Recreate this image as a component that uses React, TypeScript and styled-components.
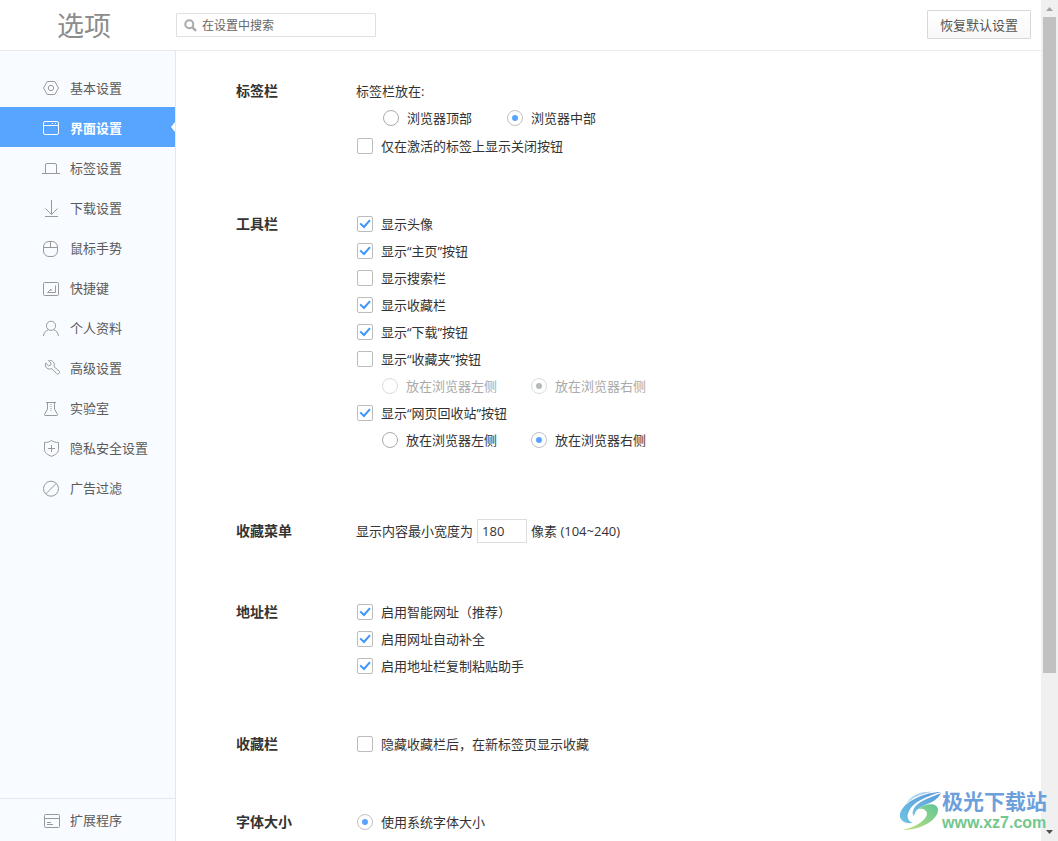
import React, { useState } from "react";
import styled, { createGlobalStyle, css } from "styled-components";

const GlobalStyle = createGlobalStyle`
  * { box-sizing: border-box; }
  html, body, #root { height: 100%; margin: 0; }
  body {
    overflow: hidden;
    background: #fff;
    color: #333;
    font: 13px/26px "Open Sans", "Noto Sans CJK SC", sans-serif;
  }
  button, input { font-family: inherit; }
`;

const Window = styled.div`
  display: flex;
  height: 100vh;
  overflow: hidden;
`;

const Page = styled.div`
  flex: 1;
  min-width: 0;
  display: flex;
  flex-direction: column;
`;

const Header = styled.header`
  flex: none;
  display: flex;
  align-items: center;
  height: 51px;
  padding-right: 10px;
  border-bottom: 1px solid #ebebeb;
`;

const PageTitle = styled.h1`
  width: 176px;
  margin: 0;
  padding: 2px 0 0 57px;
  color: #8c8c8c;
  font-size: 27px;
  line-height: 48px;
  font-weight: 400;
`;

const SearchBox = styled.label`
  display: flex;
  align-items: center;
  gap: 5px;
  width: 200px;
  height: 24px;
  padding-left: 7px;
  border: 1px solid #e0e0e0;
  border-radius: 1px;
`;

const SearchInput = styled.input`
  flex: 1;
  min-width: 0;
  height: 22px;
  padding: 0;
  border: 0;
  outline: 0;
  background: none;
  font-size: 12px;
  &::placeholder { color: #666; opacity: 1; }
`;

const ResetButton = styled.button`
  margin: 0 0 1px auto;
  width: 104px;
  height: 29px;
  padding: 0 0 1px;
  border: 1px solid #d8d8d8;
  border-radius: 1px;
  background: linear-gradient(#fff, #f8f8f8);
  color: #555;
  font-size: 13px;
`;

const Body = styled.div`
  flex: 1;
  min-height: 0;
  display: flex;
`;

const Sidebar = styled.nav`
  flex: none;
  display: flex;
  flex-direction: column;
  width: 176px;
  border-right: 1px solid #e2e8ee;
  background: #f8fbff;
`;

const NavList = styled.div`
  flex: 1;
  padding-top: 16px;
`;

const NavLink = styled.a<{ $active?: boolean }>`
  position: relative;
  display: flex;
  align-items: center;
  gap: 9px;
  height: 40px;
  padding: 2px 0 0 42px;
  color: #5a5a5a;
  text-decoration: none;
  svg { color: #999; }
  ${(p) =>
    p.$active &&
    css`
      background: #57a5ff;
      color: #fff;
      font-weight: 700;
      svg { color: #fff; }
      &::after {
        content: "";
        position: absolute;
        right: 0;
        top: 15px;
        border: 5px solid transparent;
        border-left: 0;
        border-right: 4px solid #fff;
      }
    `}
`;

const NavFooter = styled.div`
  border-top: 1px solid #e2e8ee;
  padding-bottom: 2px;
`;

const Content = styled.main`
  flex: 1;
  min-width: 0;
  overflow: hidden;
  padding: 27px 20px 0 60px;
`;

const Section = styled.section<{ $spacious?: boolean }>`
  display: flex;
  margin-bottom: 51px;
  ${(p) => p.$spacious && "padding: 13px 0 3px;"}
`;

const SectionTitle = styled.h2`
  flex: none;
  width: 120px;
  margin: 0;
  font-size: 14px;
  line-height: 26px;
  font-weight: 700;
`;

const Rows = styled.div`
  flex: 1;
  min-width: 0;
`;

const Row = styled.div`
  display: flex;
  align-items: center;
  height: 27px;
  padding-bottom: 1px;
`;

const RadioRow = styled(Row)<{ $roomy?: boolean }>`
  gap: ${(p) => (p.$roomy ? 34 : 33)}px;
  height: ${(p) => (p.$roomy ? 28 : 27)}px;
  padding-bottom: ${(p) => (p.$roomy ? 2 : 1)}px;
  padding-left: ${(p) => (p.$roomy ? 26 : 25)}px;
`;

const Choice = styled.label<{ $disabled?: boolean }>`
  display: flex;
  align-items: center;
  gap: 8px;
  margin-left: 1px;
  color: ${(p) => (p.$disabled ? "#aaa" : "#333")};
`;

const CheckInput = styled.input`
  appearance: none;
  flex: none;
  width: 16px;
  height: 16px;
  margin: 0;
  border: 1px solid #bcbcbc;
  border-radius: 2px;
  background: #fff;
  display: grid;
  place-items: center;
  &:checked::after {
    content: "";
    width: 12px;
    height: 10px;
    background: #3f96f8;
    clip-path: polygon(4% 50%, 16% 38%, 40% 66%, 86% 6%, 98% 18%, 42% 94%);
  }
`;

const RadioInput = styled.input`
  appearance: none;
  flex: none;
  width: 16px;
  height: 16px;
  margin: 0;
  border: 1px solid #ababab;
  border-radius: 50%;
  background: #fff;
  display: grid;
  place-items: center;
  &:checked { border-color: #c0c0c0; }
  &:checked::after {
    content: "";
    width: 6px;
    height: 6px;
    border-radius: 50%;
    background: #57a5ff;
  }
  &:disabled { border-color: #dcdcdc; }
  &:disabled:checked::after { background: #b4bab4; }
`;

const WidthInput = styled.input`
  width: 50px;
  height: 24px;
  margin: 0 4px;
  padding: 0 4px;
  border: 1px solid #ddd;
  outline: 0;
  color: #333;
  font-size: 13px;
`;

const ScrollTrack = styled.div`
  flex: none;
  display: flex;
  flex-direction: column;
  align-items: center;
  width: 17px;
  background: #f0f0f0;
`;

const ScrollArrow = styled.svg`
  flex: none;
  display: block;
  width: 17px;
  height: 17px;
`;

const ScrollThumb = styled.div`
  width: 13px;
  height: 78%;
  background: #c1c1c1;
`;

const ScrollSpace = styled.div`
  flex: 1;
  width: 17px;
`;

const Watermark = styled.div`
  position: absolute;
  right: 11px;
  bottom: 7px;
  display: flex;
  align-items: center;
  pointer-events: none;
`;

const WatermarkText = styled.div`
  display: flex;
  flex-direction: column;
`;

const WatermarkName = styled.span`
  color: #6c9fdb;
  font-size: 21px;
  line-height: 22px;
  font-weight: 700;
`;

const WatermarkUrl = styled.span`
  color: #72c78d;
  font: 700 16px/22px "Liberation Sans", sans-serif;
`;

const icons: Record<string, React.ReactNode> = {
  basic: (
    <>
      <path d="M5.200 2.500h7.600L16.500 9l-3.700 6.500H5.200L1.500 9z" />
      <circle cx="9" cy="9" r="2.700" />
    </>
  ),
  window: (
    <>
      <rect x="1.500" y="2.500" width="15" height="13" rx="1.500" />
      <path d="M1.500 6.500h15M10 4.500h1M13 4.500h1" />
    </>
  ),
  tab: <path d="M0 14.500h18M3.500 14.500V6a1.500 1.500 0 0 1 1.500-1.500h8A1.500 1.500 0 0 1 14.500 6v8.500" />,
  download: <path d="M9.500 1v14.500M3.500 9.500l6 6 6-6M3 17.500h13" />,
  mouse: (
    <>
      <rect x="1.500" y="2.500" width="14" height="15" rx="5.500" />
      <path d="M1.500 8.500h14M8.500 2.500v6" />
    </>
  ),
  shortcut: (
    <>
      <rect x="1.500" y="3.500" width="15" height="13" rx="1" />
      <path d="M13.500 6.500v7h-8L9 10v2" />
    </>
  ),
  profile: (
    <>
      <circle cx="9" cy="6.800" r="4.600" />
      <path d="M1.500 17c.3-3 2-5.200 4.700-6.200M16.500 17c-.3-3-2-5.200-4.700-6.200" />
    </>
  ),
  wrench: (
    <path d="M3.600 4 6.500 6.800l2-.6.600-2L6.500 1.600c2.700-.8 6 .9 5.800 4.600l-.3 1.500 5 4.300c1.700 1.600-.8 4.200-2.500 2.500L9.900 9.700C6.300 11 2.200 8.800 3.600 4z" />
  ),
  lab: (
    <>
      <path d="M4 3.500h10M5.500 3.500v6.500l-3 5.500c-.3.600 0 1 .6 1h11.800c.6 0 .9-.4.600-1l-3-5.500V3.500" />
      <path d="M9 5v8" strokeDasharray="1 1" />
    </>
  ),
  shield: (
    <>
      <path d="M9.500 1.500c2 1.400 4.200 2 7 2v7c0 3.500-3.500 5.500-7 6.800-3.500-1.300-7-3.300-7-6.800v-7c2.800 0 5-.6 7-2z" />
      <path d="M9.500 6v7M6 9.500h7" />
    </>
  ),
  block: (
    <>
      <circle cx="9" cy="9.700" r="7.500" />
      <path d="M3.700 15 14.300 4.400" />
    </>
  ),
  extension: (
    <>
      <rect x="2.500" y="3.500" width="15" height="13" rx="1" />
      <path d="M2.500 7.500h15M5 11.500h4M5 13.500h6" />
    </>
  ),
};

const Icon = ({ name }: { name: string }) => (
  <svg width="19" height="18" viewBox="0 0 19 18" fill="none" stroke="currentColor" aria-hidden="true">
    {icons[name]}
  </svg>
);

const navItems = [
  ["basic", "基本设置"],
  ["window", "界面设置"],
  ["tab", "标签设置"],
  ["download", "下载设置"],
  ["mouse", "鼠标手势"],
  ["shortcut", "快捷键"],
  ["profile", "个人资料"],
  ["wrench", "高级设置"],
  ["lab", "实验室"],
  ["shield", "隐私安全设置"],
  ["block", "广告过滤"],
];

const Check = ({ label, on }: { label: string; on?: boolean }) => (
  <Row>
    <Choice>
      <CheckInput type="checkbox" defaultChecked={on} />
      {label}
    </Choice>
  </Row>
);

interface RadiosProps {
  name: string;
  options: string[];
  selected: number;
  disabled?: boolean;
  roomy?: boolean;
}

const Radios = ({ name, options, selected, disabled, roomy }: RadiosProps) => (
  <RadioRow $roomy={roomy}>
    {options.map((option, i) => (
      <Choice key={option} $disabled={disabled}>
        <RadioInput type="radio" name={name} defaultChecked={i === selected} disabled={disabled} />
        {option}
      </Choice>
    ))}
  </RadioRow>
);

const sides = ["放在浏览器左侧", "放在浏览器右侧"];

export default function App() {
  const [active, setActive] = useState("window");
  return (
    <Window>
      <GlobalStyle />
      <Page>
        <Header>
          <PageTitle>选项</PageTitle>
          <SearchBox>
            <svg width="13" height="13" viewBox="0 0 13 13" fill="none" stroke="#aaa" strokeWidth="2" aria-hidden="true">
              <circle cx="5.300" cy="5.300" r="4" />
              <path d="m8.200 8.200 3.800 3.600" strokeWidth="2.500" />
            </svg>
            <SearchInput aria-label="在设置中搜索" placeholder="在设置中搜索" />
          </SearchBox>
          <ResetButton type="button">恢复默认设置</ResetButton>
        </Header>
        <Body>
          <Sidebar>
            <NavList>
              {navItems.map(([key, label]) => (
                <NavLink key={key} href={`#${key}`} $active={key === active} onClick={() => setActive(key)}>
                  <Icon name={key} />
                  {label}
                </NavLink>
              ))}
            </NavList>
            <NavFooter>
              <NavLink href="#extensions">
                <Icon name="extension" />
                扩展程序
              </NavLink>
            </NavFooter>
          </Sidebar>
          <Content>
            <Section>
              <SectionTitle>标签栏</SectionTitle>
              <Rows>
                <Row>标签栏放在:</Row>
                <Radios name="tabs" options={["浏览器顶部", "浏览器中部"]} selected={1} roomy />
                <Check label="仅在激活的标签上显示关闭按钮" />
              </Rows>
            </Section>
            <Section>
              <SectionTitle>工具栏</SectionTitle>
              <Rows>
                <Check label="显示头像" on />
                <Check label="显示“主页”按钮" on />
                <Check label="显示搜索栏" />
                <Check label="显示收藏栏" on />
                <Check label="显示“下载”按钮" on />
                <Check label="显示“收藏夹”按钮" />
                <Radios name="favorites" options={sides} selected={1} disabled />
                <Check label="显示“网页回收站”按钮" on />
                <Radios name="recycle" options={sides} selected={1} />
              </Rows>
            </Section>
            <Section $spacious>
              <SectionTitle>收藏菜单</SectionTitle>
              <Rows>
                <Row>
                  <label htmlFor="menu-width">显示内容最小宽度为</label>
                  <WidthInput id="menu-width" type="text" defaultValue="180" />
                  像素 (104~240)
                </Row>
              </Rows>
            </Section>
            <Section>
              <SectionTitle>地址栏</SectionTitle>
              <Rows>
                <Check label="启用智能网址（推荐）" on />
                <Check label="启用网址自动补全" on />
                <Check label="启用地址栏复制粘贴助手" on />
              </Rows>
            </Section>
            <Section>
              <SectionTitle>收藏栏</SectionTitle>
              <Rows>
                <Check label="隐藏收藏栏后，在新标签页显示收藏" />
              </Rows>
            </Section>
            <Section>
              <SectionTitle>字体大小</SectionTitle>
              <Rows>
                <Row>
                  <Choice>
                    <RadioInput type="radio" name="font-size" defaultChecked />
                    使用系统字体大小
                  </Choice>
                </Row>
              </Rows>
            </Section>
          </Content>
        </Body>
      </Page>
      <ScrollTrack>
        <ScrollArrow viewBox="0 0 17 17" fill="#a3a3a3"><path d="M5 11h7L8.500 7z" /></ScrollArrow>
        <ScrollThumb />
        <ScrollSpace />
        <ScrollArrow viewBox="0 0 17 17" fill="#505050"><path d="M5 6h7l-3.500 4z" /></ScrollArrow>
      </ScrollTrack>
      <Watermark>
        <svg width="43" height="42" viewBox="0 0 43 42" aria-hidden="true">
          <defs>
            <linearGradient id="swirl-blue" x1="0" y1="1" x2="1" y2="0">
              <stop offset="0" stopColor="#6fc3e4" />
              <stop offset="1" stopColor="#5b97da" />
            </linearGradient>
            <linearGradient id="swirl-green" x1="0" y1="1" x2="1" y2="0">
              <stop offset="0" stopColor="#c3e07a" />
              <stop offset="1" stopColor="#5fc59a" />
            </linearGradient>
          </defs>
          <path fill="url(#swirl-blue)" opacity="0.5" d="M33 1C22 0 12 4 7 13c6-6 15-10 26-12z" />
          <path fill="url(#swirl-blue)" d="M42 1C27 1 4 10 1 23c-1 6 4 10 13 9-5-2-7-6-4-12C14 11 28 5 42 1z" />
          <path fill="url(#swirl-blue)" d="M42 2C31 7 17 10 14 20c-1 2 0 4 1 5 1-6 6-9 13-12 6-2 11-5 14-11z" />
          <path fill="url(#swirl-green)" d="M19 18c7-6 20-7 20 1 0 10-17 20-35 20 12-3 23-9 24-16 0-4-4-6-9-5z" />
        </svg>
        <WatermarkText>
          <WatermarkName>极光下载站</WatermarkName>
          <WatermarkUrl>www.xz7.com</WatermarkUrl>
        </WatermarkText>
      </Watermark>
    </Window>
  );
}
